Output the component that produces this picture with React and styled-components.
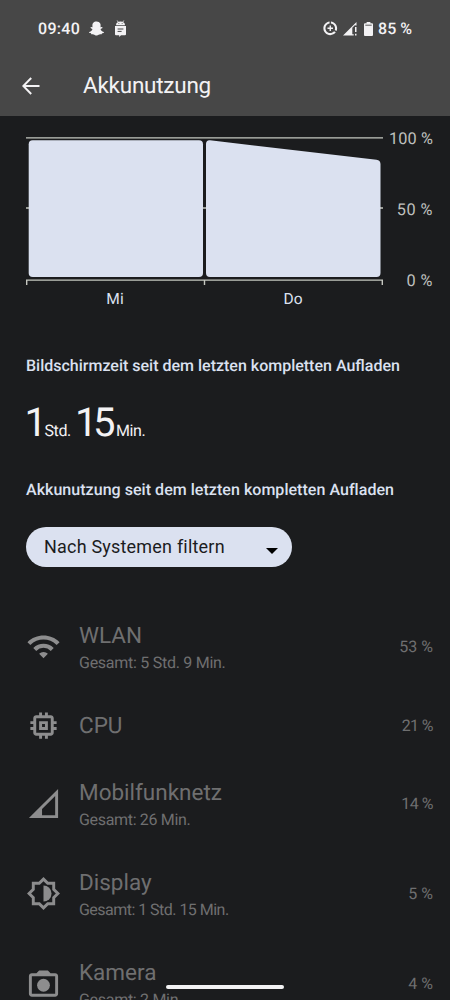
import React from 'react';
import styled, { createGlobalStyle, ThemeProvider } from 'styled-components';
import { FaSnapchatGhost } from 'react-icons/fa';
import { MdMemory, MdWifi } from 'react-icons/md';

const theme = {
  colors: {
    background: '#1b1c1e',
    header: '#474747',
    accent: '#dbe1f0',
    text: '#f3f2f4',
    axis: '#c5c7c0',
    axisLabel: '#bfc0be',
    disabled: '#6f6f70',
    disabledIcon: '#8d8d8e',
  },
  font: "Roboto, 'Liberation Sans', sans-serif",
};

const GlobalStyle = createGlobalStyle`
  * {
    box-sizing: border-box;
  }
  body {
    margin: 0;
    background: #1b1c1e;
    overflow: hidden;
    text-rendering: geometricPrecision;
  }
  svg {
    display: block;
    flex: none;
  }
`;

const Screen = styled.div`
  position: relative;
  width: 450px;
  height: 1000px;
  overflow: hidden;
  color: ${({ theme }) => theme.colors.text};
  background: ${({ theme }) => theme.colors.background};
  font-family: ${({ theme }) => theme.font};
  white-space: nowrap;
`;

const Header = styled.header`
  height: 116px;
  background: ${({ theme }) => theme.colors.header};
`;

const StatusBar = styled.div`
  height: 57px;
  padding: 0 38px;
  display: flex;
  align-items: center;
  justify-content: space-between;
  font-size: 16px;
  font-weight: 500;
`;

const StatusGroup = styled.div`
  display: flex;
  align-items: center;
`;

const StatusIcon = styled.span`
  margin-left: ${({ $gap }) => $gap}px;
`;

const StatusText = styled.span`
  width: ${({ $width }) => $width}px;
  letter-spacing: ${({ $spacing }) => $spacing || 0}px;
`;

const TitleBar = styled.div`
  height: 57px;
  padding-left: 21.5px;
  display: flex;
  align-items: center;
`;

const PageTitle = styled.h1`
  margin: 0 0 0 43.5px;
  font-size: 22.5px;
  font-weight: 400;
  line-height: 30px;
  letter-spacing: -0.25px;
`;

const Main = styled.main`
  padding: 21px 17px 0 26px;
`;

const ChartRow = styled.div`
  display: flex;
  justify-content: space-between;
  height: 148px;
`;

const AxisLabels = styled.div`
  display: flex;
  flex-direction: column;
  align-items: flex-end;
  justify-content: space-between;
  height: 162px;
  margin-top: -8px;
  font-size: 16.3px;
  line-height: 20px;
  color: ${({ theme }) => theme.colors.axisLabel};
`;

const AxisLabel = styled.span`
  letter-spacing: ${({ $spacing }) => $spacing}px;
`;

const DayLabels = styled.div`
  display: flex;
  width: 356px;
  margin-top: 4px;
  font-size: 15.5px;
  line-height: 20px;
  color: ${({ theme }) => theme.colors.accent};
`;

const DayLabel = styled.span`
  flex: 1;
  text-align: center;
`;

const SectionTitle = styled.h2`
  margin: ${({ $top }) => $top}px 0 0;
  font-size: 16px;
  font-weight: 500;
  line-height: 20px;
  letter-spacing: ${({ $spacing }) => $spacing}px;
  color: ${({ theme }) => theme.colors.accent};
`;

const Duration = styled.div`
  display: flex;
  align-items: baseline;
  height: 48px;
  margin-top: 23px;
  line-height: 48px;
`;

const Amount = styled.span`
  width: ${({ $width }) => $width}px;
  font-size: 40px;
  letter-spacing: -4.5px;
  text-indent: -1.5px;
`;

const Unit = styled.span`
  width: ${({ $width }) => $width}px;
  font-size: 16px;
  letter-spacing: -0.4px;
`;

const FilterButton = styled.button`
  display: flex;
  align-items: center;
  justify-content: space-between;
  width: 266px;
  height: 40px;
  margin: 27px 0 0;
  padding: 0 14px 1px 18px;
  border: 0;
  border-radius: 20px;
  background: ${({ theme }) => theme.colors.accent};
  color: ${({ theme }) => theme.colors.background};
  font-family: inherit;
  font-size: 18px;
  letter-spacing: 0.2px;
`;

const Caret = styled.span`
  margin-top: 8px;
  border: 5.5px solid transparent;
  border-width: 6px 6px 0;
  border-top-color: #000;
`;

const List = styled.ul`
  margin: 34.5px 0 0;
  padding: 0;
  list-style: none;
`;

const Item = styled.li`
  display: flex;
  align-items: center;
  height: ${({ $compact }) => ($compact ? 67 : 90)}px;
  color: ${({ theme }) => theme.colors.disabled};
  svg {
    color: ${({ theme }) => theme.colors.disabledIcon};
  }
`;

const ItemText = styled.div`
  flex: 1;
  margin-left: 18px;
`;

const ItemName = styled.div`
  padding-top: 1px;
  font-size: 22.5px;
  line-height: 32px;
`;

const ItemTotal = styled.div`
  font-size: 16px;
  line-height: 22px;
  letter-spacing: ${({ $spacing }) => $spacing}px;
`;

const ItemShare = styled.div`
  font-size: 16px;
  letter-spacing: ${({ $spacing }) => $spacing || 0}px;
`;

const HomeIndicator = styled.div`
  position: absolute;
  left: 166px;
  bottom: 11px;
  width: 118px;
  height: 4px;
  border-radius: 2px;
  background: #f3f2f4;
`;

const MessageRobotIcon = () => (
  <svg width="11" height="17" viewBox="0 0 11 17" fill="currentColor">
    <path d="M2.2.5l1 1.6M8.8.5l-1 1.6" stroke="currentColor" strokeWidth=".8" />
    <path d="M1 5.2C1 3 2.8 1.6 5.5 1.6S10 3 10 5.2z" />
    <path d="M0 6h11v8.2a1 1 0 0 1-1 1H6L4.2 17v-1.8H1a1 1 0 0 1-1-1z" />
    <path d="M2.6 9h5.8M2.6 11.4h4" stroke="#474747" strokeWidth="1" />
    <path d="M3.4 3.2h.9v.9h-.9zM6.7 3.2h.9v.9h-.9z" fill="#474747" />
  </svg>
);

const DataSaverIcon = () => (
  <svg width="16.5" height="16.5" viewBox="0 0 24 24" fill="currentColor">
    <path d="M11 8v3H8v2h3v3h2v-3h3v-2h-3V8h-2zm2-5.95v3.03c3.39.49 6 3.39 6 6.92 0 .9-.18 1.75-.48 2.54l2.6 1.53c.56-1.24.88-2.62.88-4.07 0-5.18-3.95-9.45-9-9.95zM12 19c-3.87 0-7-3.13-7-7 0-3.53 2.61-6.43 6-6.92V2.05c-5.06.5-9 4.76-9 9.95 0 5.52 4.47 10 9.99 10 3.31 0 6.24-1.61 8.06-4.09l-2.6-1.53C16.17 17.98 14.21 19 12 19z" />
  </svg>
);

const WeakSignalIcon = () => (
  <svg width="14" height="14" viewBox="0 0 14 14" fill="currentColor">
    <path d="M0 13.5L13.5 0v3.5h-1.2v-.8L9.3 5.8v6.5h1.4v1.2z" />
    <path d="M12 5h1.5v5H12zM12 11.8h1.5v1.7H12z" />
  </svg>
);

const BatteryIcon = () => (
  <svg width="9" height="14" viewBox="0 0 9 14" fill="currentColor">
    <path d="M2.6 0h3.8v1.3H8.1c.5 0 .9.4.9.9v10.9c0 .5-.4.9-.9.9H.9c-.5 0-.9-.4-.9-.9V2.2c0-.5.4-.9.9-.9h1.7z" />
    <path d="M1.3 3.2h6.4" stroke="#474747" strokeWidth=".9" />
  </svg>
);

const BackIcon = () => (
  <svg width="18" height="18" viewBox="0 0 18 18" fill="none" stroke="currentColor" strokeWidth="2">
    <path d="M17.5 9H1.5M9.2 1L1.3 9l7.9 8" />
  </svg>
);

const MobileIcon = () => (
  <svg width="35" height="35" viewBox="0 0 24 24" fill="currentColor">
    <path fillRule="evenodd" d="M2 22h20V2zM20 20h-9v-4.17l9-9z" />
  </svg>
);

const DisplayIcon = () => (
  <svg width="35" height="35" viewBox="0 0 24 24" fill="currentColor">
    <path d="M20 8.69V4h-4.69L12 .69 8.69 4H4v4.69L.69 12 4 15.31V20h4.69L12 23.31 15.31 20H20v-4.69L23.31 12 20 8.69zm-2 5.79V18h-3.52L12 20.48 9.52 18H6v-3.52L3.52 12 6 9.52V6h3.52L12 3.52 14.48 6H18v3.52L20.48 12 18 14.48z" />
    <path d="M12 6.5a5.5 5.5 0 0 1 0 11z" />
  </svg>
);

const CameraIcon = () => (
  <svg width="35" height="35" viewBox="0 0 24 24" fill="currentColor">
    <path
      fillRule="evenodd"
      d="M20 5h-3.17L15 3H9L7.17 5H4c-1.1 0-2 .9-2 2v12c0 1.1.9 2 2 2h16c1.1 0 2-.9 2-2V7c0-1.1-.9-2-2-2zm0 14H4V7h16z"
    />
    <circle cx="12" cy="13.2" r="4.4" />
  </svg>
);

const UsageChart = () => (
  <svg width="357" height="148" viewBox="0 0 357 148">
    <g fill="none" stroke={theme.colors.axis} strokeWidth="1.4">
      <path d="M0 .9h357" />
      <path d="M.7 148v-4.9h355.6v4.9M178.5 143v5" />
      <path d="M0 71h3M177 71h4M354 71h3" />
    </g>
    <rect x="2.7" y="3.2" width="174.3" height="136.8" rx="4" fill={theme.colors.accent} />
    <path
      d="M180 7c0-2.6 1.6-4 4-3.7L350.5 22.7c2.6.4 4 1.8 4 4.3V136a4 4 0 0 1-4 4H184a4 4 0 0 1-4-4z"
      fill={theme.colors.accent}
    />
  </svg>
);

const consumers = [
  {
    name: 'WLAN',
    total: 'Gesamt: 5 Std. 9 Min.',
    totalSpacing: -0.27,
    share: '53 %',
    icon: <MdWifi size={35} />,
  },
  { name: 'CPU', share: '21 %', shareSpacing: -0.6, icon: <MdMemory size={35} /> },
  {
    name: 'Mobilfunknetz',
    total: 'Gesamt: 26 Min.',
    totalSpacing: -0.33,
    share: '14 %',
    shareSpacing: -0.5,
    icon: <MobileIcon />,
  },
  {
    name: 'Display',
    total: 'Gesamt: 1 Std. 15 Min.',
    totalSpacing: -0.53,
    share: '5 %',
    icon: <DisplayIcon />,
  },
  {
    name: 'Kamera',
    total: 'Gesamt: 2 Min.',
    totalSpacing: -0.3,
    share: '4 %',
    icon: <CameraIcon />,
  },
];

const App = () => (
  <ThemeProvider theme={theme}>
    <GlobalStyle />
    <Screen>
      <Header>
        <StatusBar>
          <StatusGroup>
            <StatusText $width={43} $spacing={0.3}>
              09:40
            </StatusText>
            <StatusIcon $gap={7.5}>
              <FaSnapchatGhost size={15} />
            </StatusIcon>
            <StatusIcon $gap={11}>
              <MessageRobotIcon />
            </StatusIcon>
          </StatusGroup>
          <StatusGroup>
            <StatusIcon $gap={0}>
              <DataSaverIcon />
            </StatusIcon>
            <StatusIcon $gap={5}>
              <WeakSignalIcon />
            </StatusIcon>
            <StatusIcon $gap={7}>
              <BatteryIcon />
            </StatusIcon>
            <StatusIcon $gap={5}>
              <StatusText>85 %</StatusText>
            </StatusIcon>
          </StatusGroup>
        </StatusBar>
        <TitleBar>
          <BackIcon />
          <PageTitle>Akkunutzung</PageTitle>
        </TitleBar>
      </Header>
      <Main>
        <ChartRow>
          <UsageChart />
          <AxisLabels>
            <AxisLabel $spacing={0.1}>100 %</AxisLabel>
            <AxisLabel $spacing={0.5}>50 %</AxisLabel>
            <AxisLabel $spacing={0.5}>0 %</AxisLabel>
          </AxisLabels>
        </ChartRow>
        <DayLabels>
          <DayLabel>Mi</DayLabel>
          <DayLabel>Do</DayLabel>
        </DayLabels>
        <SectionTitle $top={47} $spacing={0}>
          Bildschirmzeit seit dem letzten kompletten Aufladen
        </SectionTitle>
        <Duration>
          <Amount $width={18.5}>1</Amount>
          <Unit $width={32}>Std.</Unit>
          <Amount $width={39.5}>15</Amount>
          <Unit>Min.</Unit>
        </Duration>
        <SectionTitle $top={33} $spacing={0.04}>
          Akkunutzung seit dem letzten kompletten Aufladen
        </SectionTitle>
        <FilterButton type="button">
          Nach Systemen filtern
          <Caret />
        </FilterButton>
        <List>
          {consumers.map(({ name, total, totalSpacing, share, shareSpacing, icon }) => (
            <Item key={name} $compact={!total}>
              {icon}
              <ItemText>
                <ItemName>{name}</ItemName>
                {total && <ItemTotal $spacing={totalSpacing}>{total}</ItemTotal>}
              </ItemText>
              <ItemShare $spacing={shareSpacing}>{share}</ItemShare>
            </Item>
          ))}
        </List>
      </Main>
      <HomeIndicator />
    </Screen>
  </ThemeProvider>
);

export default App;
